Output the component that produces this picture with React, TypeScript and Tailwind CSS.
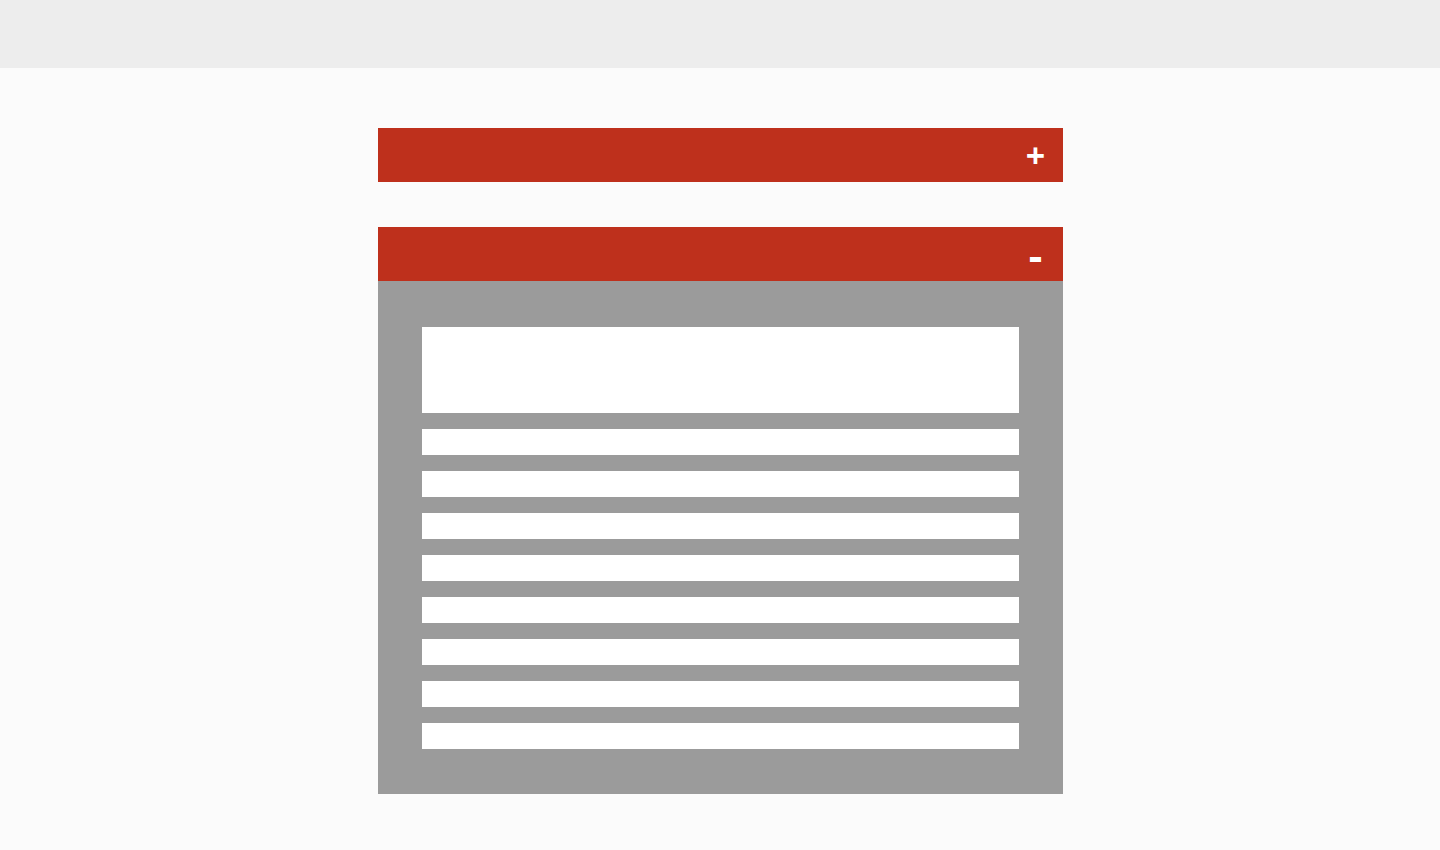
const ROWS = [0, 1, 2, 3, 4, 5, 6, 7];

function AccordionHeader({ open }: { open: boolean }) {
  return (
    <div className="flex h-[54px] items-center justify-end bg-[#be301c] pr-[17px] text-white">
      <span className="flex h-[20px] w-[20px] items-center justify-center font-bold leading-none [font-family:'Open_Sans',sans-serif]">
        {open ? (
          <span className="mt-[1px] text-[42px] leading-none">-</span>
        ) : (
          <span className="text-[34px] leading-none">+</span>
        )}
      </span>
    </div>
  );
}

export default function App() {
  return (
    <div className="min-h-[850px] bg-[#fbfbfb]">
      {/* Top bar */}
      <div className="h-[68px] bg-[#ededed]" />

      <div className="mx-auto flex w-[685px] flex-col pt-[60px]">
        <AccordionHeader open={false} />

        <div className="mt-[45px]">
          <AccordionHeader open={true} />
          <div className="flex flex-col gap-4 bg-[#9b9b9b] px-[44px] pb-[45px] pt-[46px]">
            <div className="h-[86px] bg-white" />
            {ROWS.map((r) => (
              <div key={r} className="h-[26px] bg-white" />
            ))}
          </div>
        </div>
      </div>
    </div>
  );
}
